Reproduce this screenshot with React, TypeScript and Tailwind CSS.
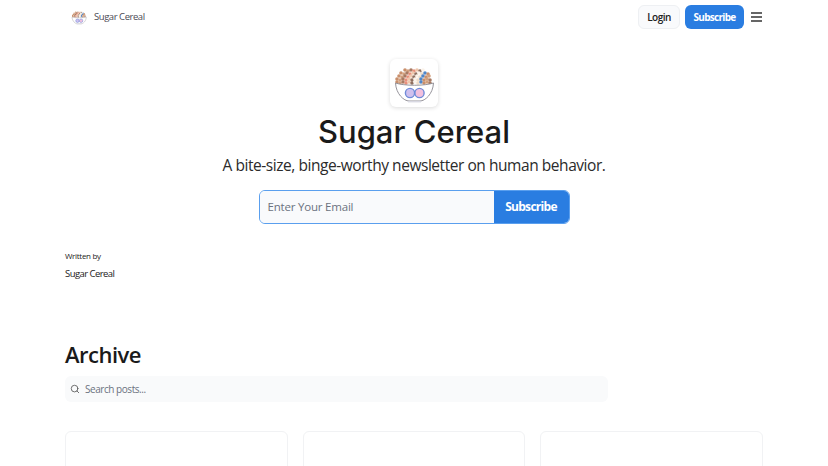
import React from 'react';
import { Search } from 'lucide-react';

const cereal = ['#c98f6b', '#f0dcc8', '#8f6f5f', '#e8907c', '#d2a07e', '#4f86c9', '#fbf3ea', '#efc9ae', '#a87a63'];

// rows of cereal bits sitting above the rim of the bowl
const bits = [
  { y: 11, from: 15, to: 33 },
  { y: 14, from: 11, to: 38 },
  { y: 17, from: 9, to: 40 },
  { y: 20, from: 7, to: 42 },
  { y: 23, from: 7, to: 42 },
].flatMap((row, r) => {
  const out: { x: number; y: number; c: string }[] = [];
  for (let x = row.from, i = r * 2; x <= row.to; x += 3, i++) {
    out.push({ x, y: row.y + (i % 2), c: cereal[(i * 4 + r) % cereal.length] });
  }
  return out;
});

const BowlLogo = ({ size }: { size: number }) => {
  return (
    <svg width={size} height={size} viewBox="0 0 48 48">
      {bits.map((b, i) => (
        <circle key={i} cx={b.x} cy={b.y} r="1.8" fill={b.c} />
      ))}
      <path d="M5.5 24 C14 27 35 27 43.5 24 C43 35 35 42 30 42 L19 42 C14 42 6 35 5.5 24 Z" fill="#fff" stroke="#8a8890" strokeWidth="0.9" />
      <path d="M18 42 h13 v1.4 h-13 z" fill="#d8d8e2" />
      <circle cx="20" cy="34" r="4.6" fill="#cfc0ee" stroke="#6f8bd8" strokeWidth="1.4" />
      <circle cx="29.5" cy="34" r="4.6" fill="#f2c0dd" stroke="#6f8bd8" strokeWidth="1.4" />
    </svg>
  );
};

const App = () => {
  return (
    <div className="h-[466px] overflow-hidden bg-white font-['Open_Sans',sans-serif] text-[#1a1a1a]">
      <div className="mx-auto w-[698px]">
        <nav className="flex h-[34px] items-center justify-between">
          <div className="flex items-center gap-[6px] pl-[5px]">
            <BowlLogo size={18} />
            <span className="pt-[1px] text-[9.5px] tracking-[-0.45px] text-[#4b4b55]">Sugar Cereal</span>
          </div>
          <div className="flex items-center">
            <button className="h-[24px] w-[42px] rounded-md border border-[#eef0f3] bg-[#f9fafc] pt-[1px] text-[10px] font-semibold tracking-[-0.5px] text-[#222]">
              Login
            </button>
            <button className="ml-[5px] h-[24px] w-[59px] rounded-md bg-[#2a7de1] pt-[1px] text-[10px] font-bold tracking-[-0.7px] text-white">
              Subscribe
            </button>
            <div className="ml-[7px] mr-[1px] flex w-[11px] flex-col gap-[2.5px]">
              <span className="h-[1.5px] bg-[#666]" />
              <span className="h-[1.5px] bg-[#666]" />
              <span className="h-[1.5px] bg-[#666]" />
            </div>
          </div>
        </nav>

        <header className="flex flex-col items-center pt-[25px]">
          <div className="flex h-[48px] w-[48px] items-center justify-center rounded-md bg-white shadow-[0_1px_4px_rgba(0,0,0,0.14)]">
            <BowlLogo size={48} />
          </div>
          <h1 className="mt-[3px] font-['Inter',sans-serif] text-[31px] leading-[44px] font-medium">Sugar Cereal</h1>
          <p className="mt-[-1px] text-[15.5px] leading-[24px] tracking-[-0.45px] text-[#2b2b2b]">
            A bite-size, binge-worthy newsletter on human behavior.
          </p>
          <form className="mt-[13px] flex h-[34px] w-[311px] overflow-hidden rounded-md border-[1.5px] border-[#5a9fee]">
            <div className="flex flex-1 items-center bg-[#f9fafc] pl-[8px] text-[11.5px] tracking-[-0.2px] text-[#6b7280]">Enter Your Email</div>
            <button className="w-[75px] bg-[#2a7de1] text-[12px] font-bold tracking-[-0.7px] text-white">Subscribe</button>
          </form>
        </header>

        <div className="mt-[26px]">
          <div className="text-[8px] leading-[12px] tracking-[-0.3px] text-[#222]">Written by</div>
          <div className="mt-[6px] text-[9.5px] leading-[12px] font-medium tracking-[-0.55px] text-[#222]">Sugar Cereal</div>
        </div>

        <section className="mt-[59px]">
          <h2 className="text-[22px] leading-[30px] font-semibold tracking-[-0.5px]">Archive</h2>
          <div className="mt-[7px] flex h-[26px] w-[543px] items-center gap-[5px] rounded-md bg-[#f9fafb] pl-[5px] text-[10px] tracking-[-0.45px] text-[#6b7280]">
            <Search size={10} className="text-[#555]" />
            <span>Search posts...</span>
          </div>
          <div className="mt-[29px] grid grid-cols-3 gap-[15px]">
            {[0, 1, 2].map((i) => (
              <div key={i} className="h-[80px] rounded-md border border-[#f1f2f4] bg-white" />
            ))}
          </div>
        </section>
      </div>
    </div>
  );
};

export default App;
